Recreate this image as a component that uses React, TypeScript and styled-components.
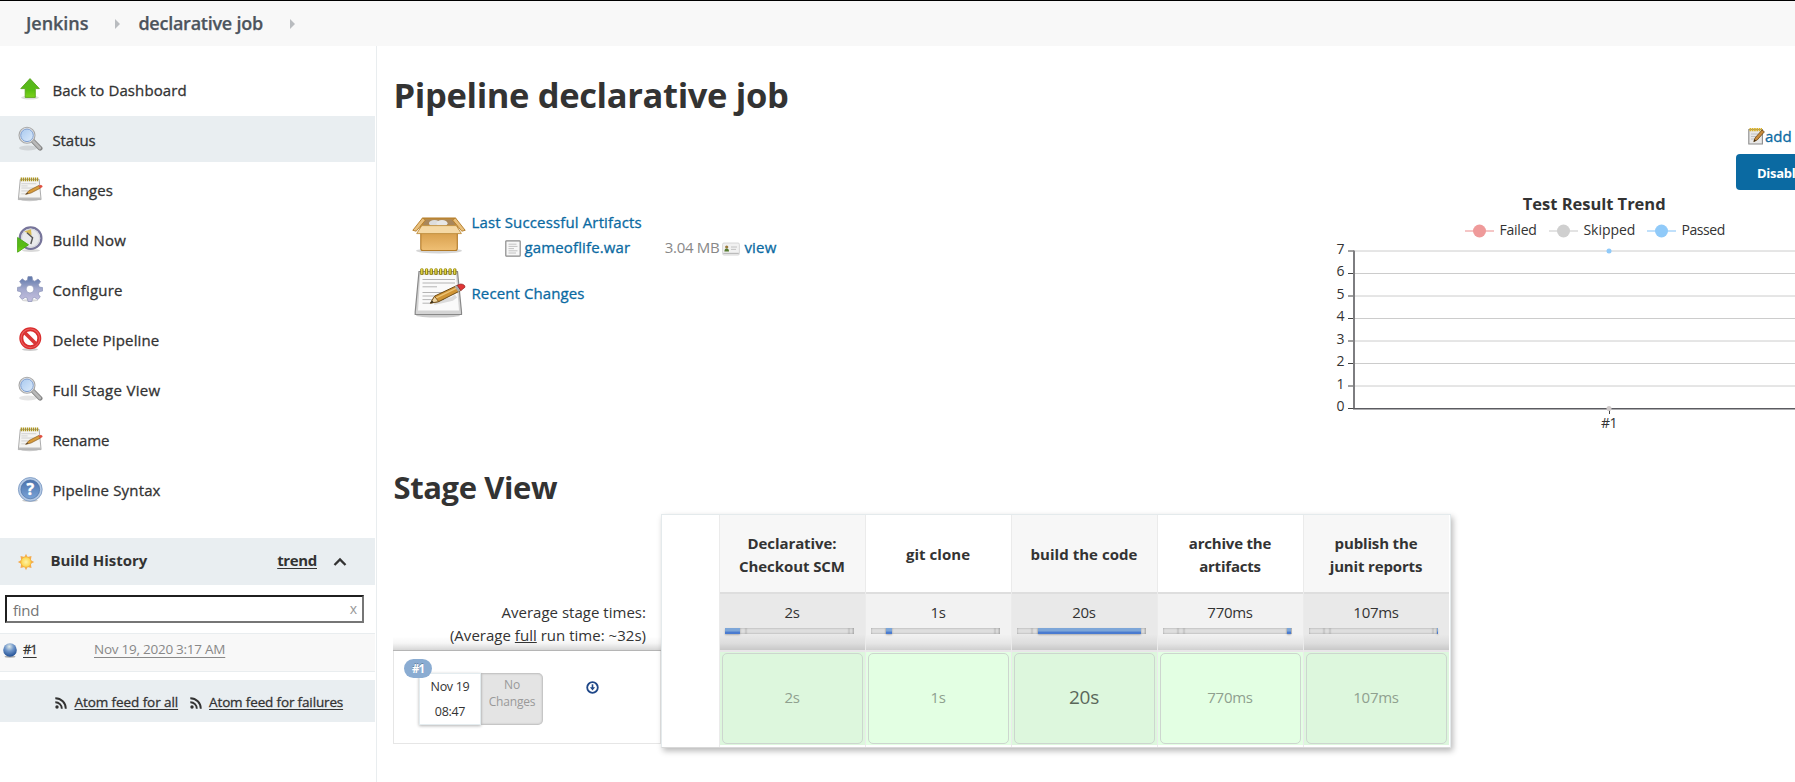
import React from 'react';
import styled, { createGlobalStyle, css } from 'styled-components';

const GlobalStyle = createGlobalStyle`
  * { box-sizing: border-box; }
  html, body { margin: 0; padding: 0; overflow: hidden; background: #fff; }
  body { font-family: "Open Sans", "Noto Sans", sans-serif; color: #333; font-size: 15px; }
  a { color: inherit; }
  svg { display: block; flex: none; }
`;

/* Medium weight: regular outlines thickened slightly. */
const medium = css`-webkit-text-stroke: 0.3px currentColor;`;

const Page = styled.div`
  width: 1795px;
  height: 782px;
  overflow: hidden;
  display: flex;
  flex-direction: column;
`;

const Breadcrumbs = styled.nav`
  height: 46px;
  flex: none;
  border-top: 1px solid #000;
  background: #f8f8f8;
  display: flex;
  align-items: center;
  padding-left: 26px;
`;
const Crumb = styled.span<{ $track: number }>`
  font-size: 18px;
  font-weight: 600;
  -webkit-text-stroke: 0.25px currentColor;
  color: #4d545d;
  line-height: 24px;
  padding-bottom: 2px;
  letter-spacing: ${p => p.$track}px;
`;
const CrumbArrow = styled.i<{ $after?: number }>`
  border-left: 5px solid #b9bcbf;
  border-top: 5px solid transparent;
  border-bottom: 5px solid transparent;
  margin-left: 27px;
  margin-right: ${p => p.$after ?? 0}px;
`;

const Columns = styled.div`
  flex: 1;
  display: flex;
  min-height: 0;
`;
const Sidebar = styled.aside`
  width: 377px;
  flex: none;
  border-right: 1px solid #e9edef;
  padding: 20px 1px 0 0;
`;
const TaskList = styled.ul`
  list-style: none;
  margin: 0 0 26px;
  padding: 0;
  display: grid;
  gap: 4px;
`;
const Task = styled.li<{ $active?: boolean }>`
  height: 46px;
  display: flex;
  align-items: center;
  padding-left: 17px;
  gap: 9.4px;
  background: ${p => (p.$active ? '#e9eef1' : 'transparent')};
`;
const TaskLabel = styled.span<{ $track: number }>`
  ${medium}
  line-height: 20px;
  padding-top: 1px;
  letter-spacing: ${p => p.$track}px;
`;

const HistoryHeader = styled.header`
  height: 47px;
  background: #e9eef1;
  display: flex;
  align-items: center;
  padding: 0 28px 0 17px;
  font-weight: 700;
  line-height: 20px;
`;
const HistoryTitle = styled.span`margin: -3px auto 0 15.4px; letter-spacing: -0.02px;`;
const TrendLink = styled.a`
  margin: -3px 16px 0 0;
  letter-spacing: -0.35px;
  text-decoration: underline;
  text-underline-offset: 2px;
`;
const SearchBox = styled.div`
  margin: 10px 11px 10px 5px;
  height: 28px;
  border: 2px solid;
  border-color: #1f1f1f #767676 #767676 #1f1f1f;
  display: flex;
  justify-content: space-between;
  align-items: center;
  padding: 2px 5px 0 6px;
  color: #757575;
  line-height: 20px;
  letter-spacing: -0.3px;
`;
const ClearMark = styled.span`color: #999; font-size: 14px; padding-bottom: 2px; letter-spacing: 0;`;
const BuildEntry = styled.div`
  height: 39px;
  border-top: 1px solid #e9edef;
  border-bottom: 1px solid #e9edef;
  background: #f8f8f8;
  display: flex;
  padding: 5px 0 0 3px;
  line-height: 20px;
`;
const BallSlot = styled.span`padding-top: 2px;`;
const BuildNumber = styled.a`
  ${medium}
  font-size: 13px;
  letter-spacing: -1.1px;
  width: 71px;
  margin-left: 6px;
  text-decoration: underline;
  text-underline-offset: 3px;
`;
const BuildDate = styled.a`
  font-size: 13.5px;
  letter-spacing: -0.25px;
  color: #888;
  text-decoration: underline;
  text-underline-offset: 3px;
`;
const FeedBar = styled.footer`
  margin-top: 8px;
  height: 42px;
  background: #e9eef1;
  display: flex;
  align-items: center;
  padding: 3px 0 0 55px;
`;
const FeedLink = styled.a<{ $track: number }>`
  ${medium}
  font-size: 13.5px;
  line-height: 20px;
  margin: -2px 11.5px 0 7.5px;
  letter-spacing: ${p => p.$track}px;
  text-decoration: underline;
  text-underline-offset: 2px;
  white-space: nowrap;
`;

const Main = styled.main`
  flex: 1;
  min-width: 0;
  padding: 29px 0 0 16px;
`;
const Heading = styled.h1<{ $size: number; $track: number }>`
  margin: 0;
  padding-left: 0.5px;
  font-size: ${p => p.$size}px;
  font-weight: 700;
  line-height: 40px;
  letter-spacing: ${p => p.$track}px;
`;
const Overview = styled.div`
  height: 352px;
  display: flex;
  justify-content: space-between;
`;
const Artifacts = styled.div`padding: 95px 0 0 19px;`;
const ArtifactRow = styled.div<{ $height: number }>`
  height: ${p => p.$height}px;
  display: flex;
  align-items: center;
`;
const ArtifactLines = styled.div`margin-left: 5.5px;`;
const ArtifactLine = styled.div<{ $inset?: number }>`
  height: 25px;
  display: flex;
  align-items: center;
  padding-bottom: ${p => (p.$inset ? 0 : 2)}px;
  padding-left: ${p => p.$inset ?? 0}px;
`;
const BlueLink = styled.a<{ $track?: number; $raise?: boolean }>`
  ${medium}
  color: #0b6aa2;
  line-height: 24px;
  white-space: nowrap;
  letter-spacing: ${p => p.$track ?? 0}px;
  padding-bottom: ${p => (p.$raise ? 2 : 0)}px;
`;
const FileSize = styled.span`
  color: #888;
  padding-bottom: 2px;
  margin: 0 3px 0 34.5px;
  letter-spacing: -0.3px;
`;
const IconSlot = styled.span<{ $gap: number }>`
  margin-right: ${p => p.$gap}px;
  padding-top: 2px;
`;

const TrendPanel = styled.section`
  width: 462px;
  padding-top: 9px;
  overflow: hidden;
`;
const DescriptionRow = styled.div`
  height: 24px;
  padding: 0 0 0 415px;
  display: flex;
  align-items: center;
`;
const DisableButton = styled.button`
  display: block;
  margin: 6px 0 0 403px;
  width: 150px;
  height: 36px;
  border: 0;
  border-radius: 4px;
  padding: 2px 21px 0;
  background: #0b6aa2;
  color: #fff;
  font: 700 13px/20px "Open Sans", sans-serif;
  letter-spacing: -0.3px;
  text-align: left;
  white-space: nowrap;
`;

const StageView = styled.section`
  display: flex;
  margin-top: 7px;
`;
const RunsColumn = styled.div`
  width: 268px;
  padding-top: 80px;
`;
const AverageBox = styled.div`
  height: 57px;
  padding: 7px 15px 0 0;
  border-bottom: 1px solid #b5b5b5;
  background: linear-gradient(to bottom, rgba(0,0,0,0) 76%, rgba(0,0,0,0.04) 88%, rgba(0,0,0,0.16) 100%);
  text-align: right;
  line-height: 23px;
  letter-spacing: 0.02px;
`;
const RunRow = styled.div`
  position: relative;
  height: 93px;
  border: 1px solid #e6e6e6;
  border-top: 0;
  display: flex;
  padding: 22px 0 0 25px;
`;
const RunBadge = styled.span`
  position: absolute;
  left: 10px;
  top: 8px;
  width: 28px;
  height: 19px;
  border-radius: 9.5px;
  background: #8aacd2;
  color: #fff;
  font-size: 11.5px;
  font-weight: 700;
  line-height: 19px;
  text-align: center;
  letter-spacing: -0.9px;
  text-shadow: 0 -1px 0 rgba(0,0,0,0.25);
`;
const RunDate = styled.div`
  width: 62px;
  height: 52px;
  border: 1px solid #e4ecef;
  background: #fff;
  box-shadow: 0 1px 3px rgba(0,0,0,0.3);
  font-size: 12.5px;
  letter-spacing: -0.3px;
  line-height: 25px;
  text-align: center;
`;
const RunChanges = styled.div`
  width: 62px;
  height: 52px;
  border-radius: 0 5px 5px 0;
  background: #e4e4e4;
  box-shadow: inset 0 0 2px 1px rgba(0,0,0,0.18);
  color: #999;
  font-size: 12px;
  letter-spacing: -0.2px;
  line-height: 17px;
  padding-top: 3px;
  text-align: center;
`;
const DownloadSlot = styled.span`padding: 8px 0 0 43px;`;

const StageTable = styled.div`
  position: relative;
  width: 790px;
  height: 234px;
  border: 1px solid #e4eaec;
  border-bottom-color: #d8d8d8;
  background: #fff;
  box-shadow: 2px 3px 6px rgba(0,0,0,0.28);
  display: flex;
  padding-left: 57px;
`;
const StageColumn = styled.div`
  width: 146px;
  border-left: 1px solid #ebebeb;
  text-align: center;
`;
const StageName = styled.div<{ $shade: boolean; $track: number }>`
  height: 79px;
  border-bottom: 2px solid #dedede;
  background: ${p => (p.$shade ? '#f7f7f7' : '#fff')};
  display: flex;
  align-items: center;
  justify-content: center;
  padding: 2px 1px 0 0;
  font-weight: 700;
  line-height: 23px;
  white-space: pre-line;
  letter-spacing: ${p => p.$track}px;
`;
const StageAverage = styled.div<{ $shade: boolean }>`
  height: 58px;
  border-bottom: 2px solid #e9e6e9;
  background:
    linear-gradient(to bottom, rgba(0,0,0,0) 72%, rgba(0,0,0,0.05) 88%, rgba(0,0,0,0.14) 100%),
    ${p => (p.$shade ? '#e9e9e9' : '#f2f2f2')};
  padding: 7px 11px 0 5px;
  line-height: 22px;
`;
const AverageTime = styled.div`padding-left: 5px; letter-spacing: -0.3px;`;
const Track = styled.div`
  display: flex;
  height: 6px;
  margin-top: 5px;
  width: 129px;
`;
const Segment = styled.i<{ $on: boolean }>`
  background: ${p => (p.$on ? 'linear-gradient(#7da6d8 45%, #4a7bd0 75%)' : '#dedede')};
  box-shadow: ${p => (p.$on ? '0 1px 2px rgba(0,0,0,0.25)' : 'inset 0 0 2px rgba(0,0,0,0.35)')};
`;
const StageCell = styled.div<{ $shade: boolean }>`
  height: 93px;
  background: ${p => (p.$shade ? '#ddf7dd' : '#e3ffe3')};
  padding: 1px 2px;
`;
const StageResult = styled.div<{ $big: boolean }>`
  height: 91px;
  border: 1px solid #cdd6cf;
  border-radius: 5px;
  display: flex;
  align-items: center;
  justify-content: center;
  padding: 0 1px 4px 0;
  font-size: ${p => (p.$big ? 19 : 15)}px;
  letter-spacing: -0.25px;
  color: ${p => (p.$big ? '#5a675a' : '#8fa08f')};
`;

const ArrowUp = () => (
  <svg width="26" height="26" viewBox="0 0 26 26">
    <ellipse cx="13" cy="21.6" rx="9" ry="2" fill="#000" opacity=".13" />
    <path d="M13 2.6 22.3 12.6H18.3V21.4H8.2V12.6H3.8Z" fill="url(#green)" stroke="#5aa51c" strokeWidth=".9" />
  </svg>
);
const Magnifier = () => (
  <svg width="26" height="26" viewBox="0 0 26 26">
    <ellipse cx="11" cy="22" rx="9" ry="2.4" fill="#000" opacity=".1" />
    <path d="M15.8 14.8 23.2 22.4" stroke="#858585" strokeWidth="4.6" strokeLinecap="round" />
    <path d="M16 15 22.8 22" stroke="#b9b9b9" strokeWidth="2.8" strokeLinecap="round" />
    <circle cx="10" cy="9.3" r="8" fill="#e8e8e8" stroke="#a8a8a8" strokeWidth="1.1" />
    <circle cx="10" cy="9.3" r="6.3" fill="url(#lens)" stroke="#7f9fd0" strokeWidth="1" />
  </svg>
);
const Notepad = () => (
  <svg width="26" height="26" viewBox="0 0 27 26">
    <ellipse cx="13" cy="24" rx="10" ry="1.6" fill="#000" opacity=".2" />
    <path d="M3.4 3H23L25 24H1.4Z" fill="#f4f4f2" stroke="#aaa" strokeWidth="1" />
    <path d="M1.6 21.8H24.8V24H1.4Z" fill="#bbb" />
    <path d="M4.5 1V5M6.6 1V5M8.7 1V5M10.8 1V5M12.9 1V5M15 1V5M17.1 1V5M19.2 1V5M21.3 1V5" stroke="#ab9422" strokeWidth="1.35" />
    <path d="M4.5 7.5H20M4.5 9.8H11M4.5 12H18M4.5 15H15M4.5 18H10" stroke="#ccc" strokeWidth=".9" />
    <path d="M9 18.5 12.5 14.6 22.6 9.4 24.4 12 14.5 17.2Z" fill="#d79b3c" stroke="#87591c" strokeWidth=".7" />
    <path d="M22.2 9.6 24.6 8.8Q27 9 26.4 11L24.3 12.2Z" fill="#e05040" />
    <path d="M8.7 18.8 10.8 16.6 12 18Z" fill="#594a35" />
  </svg>
);
const BuildClock = () => (
  <svg width="26" height="28" viewBox="0 0 26 28">
    <ellipse cx="14" cy="25.5" rx="9" ry="1.5" fill="#000" opacity=".15" />
    <circle cx="13.6" cy="13.2" r="10.8" fill="#e9eaec" stroke="#77759a" strokeWidth="2.2" />
    <circle cx="13.6" cy="13.2" r="9" fill="none" stroke="#d5d6dd" strokeWidth="1.2" />
    <path d="M7.4 6.5 14 4.2 14.6 10.5Z" fill="#d8bd55" />
    <path d="M10 7.8 15.6 12.8 13.8 19" fill="none" stroke="#555" strokeWidth="1.4" />
    <path d="M0.6 12.5V27.2L11.5 19.8Z" fill="url(#green)" stroke="#48a514" strokeWidth=".9" />
  </svg>
);
const Gear = () => (
  <svg width="26" height="26" viewBox="0 0 26 26">
    <ellipse cx="13" cy="24.4" rx="8" ry="1.3" fill="#000" opacity=".15" />
    <path fillRule="evenodd" d="M11 .6H15L15.8 4.4 17.8 5.2 21 3 23.6 5.6 21.4 8.6 22.2 11 25.6 11.6V15L22.2 15.7 21.2 18 23.3 21 20.7 23.6 17.6 21.4 15.5 22.3 14.9 25.5H11L10.3 22.2 8.2 21.3 5.2 23.4 2.5 20.8 4.6 17.8 3.8 15.7.4 15V11.4L3.8 10.8 4.7 8.5 2.6 5.4 5.2 2.8 8.2 5 10.3 4.2ZM13 9.2A3.9 3.9 0 1 0 13 17 3.9 3.9 0 1 0 13 9.2Z" fill="url(#gear)" stroke="#8b93b8" strokeWidth=".7" />
  </svg>
);
const NoEntry = () => (
  <svg width="26" height="26" viewBox="0 0 26 26">
    <ellipse cx="13" cy="23.5" rx="8" ry="1.4" fill="#000" opacity=".2" />
    <circle cx="13.3" cy="12.3" r="9" fill="#fff" stroke="#d92c2c" strokeWidth="4" />
    <circle cx="13.3" cy="12.3" r="9.3" fill="none" stroke="#ea5c5c" strokeWidth="1.2" />
    <path d="M7.3 6.3 19.3 18.3" stroke="#d93636" strokeWidth="3.7" />
  </svg>
);
const Help = () => (
  <svg width="26" height="26" viewBox="0 0 26 26">
    <ellipse cx="13" cy="24.6" rx="8" ry="1.3" fill="#000" opacity=".2" />
    <circle cx="13.3" cy="13.4" r="11.9" fill="#b4c9e4" stroke="#7594bf" strokeWidth=".8" />
    <circle cx="13.3" cy="13.4" r="9.4" fill="url(#help)" stroke="#4369a0" strokeWidth=".6" />
    <text x="13.3" y="19.2" textAnchor="middle" fontSize="16" fontWeight="700" fill="#fff" stroke="#fff" strokeWidth=".4">?</text>
  </svg>
);
const Sun = () => (
  <svg width="18" height="18" viewBox="0 0 18 18">
    <path d="M9 .8 10.5 4 14.5 3 13.8 7.2 17.2 9 13.8 10.8 14.5 15 10.5 14 9 17.2 7.5 14 3.5 15 4.2 10.8.8 9 4.2 7.2 3.5 3 7.5 4Z" fill="#f5a94a" />
    <circle cx="9" cy="9" r="5.2" fill="url(#sun)" stroke="#f2b03e" strokeWidth=".7" />
  </svg>
);
const ChevronUp = () => (
  <svg width="14" height="10" viewBox="0 0 14 10">
    <path d="M1.5 8 7 2.5 12.5 8" fill="none" stroke="#333" strokeWidth="2.3" />
  </svg>
);
const BlueBall = () => (
  <svg width="14" height="18" viewBox="0 0 14 18">
    <ellipse cx="7" cy="15.6" rx="5.5" ry="1.2" fill="#000" opacity=".3" />
    <circle cx="7" cy="9" r="6.8" fill="url(#ball)" />
  </svg>
);
const Rss = () => (
  <svg width="12" height="12" viewBox="0 0 12 12">
    <circle cx="2" cy="10" r="1.7" fill="#333" />
    <path d="M.3 5.2A6.4 6.4 0 0 1 6.8 11.8M.3 1.2A10.4 10.4 0 0 1 10.8 11.8" fill="none" stroke="#333" strokeWidth="1.9" />
  </svg>
);
const Package = () => (
  <svg width="54" height="38" viewBox="0 0 54 38">
    <ellipse cx="27" cy="34.8" rx="23" ry="2.6" fill="#000" opacity=".16" />
    <path d="M10.5 2H43.5L47 17H7Z" fill="#c08c3e" stroke="#b27a27" strokeWidth="1" />
    <path d="M13 3.5H41L43 9H11Z" fill="#a9875a" />
    <ellipse cx="22.5" cy="7.3" rx="5.5" ry="3.3" fill="#ddd" /><ellipse cx="30" cy="7.3" rx="5.5" ry="3.3" fill="#e7e7e7" />
    <path d="M10.5 2 .8 14.3 4.2 15.2 13.5 4Z" fill="#e9c07c" stroke="#b27a27" strokeWidth=".9" />
    <path d="M43.5 2 53.2 14.3 49.8 15.2 40.5 4Z" fill="#e9c07c" stroke="#b27a27" strokeWidth=".9" />
    <path d="M8.8 16H45.3V32.5Q45.3 34.5 43.3 34.5H10.8Q8.8 34.5 8.8 32.5Z" fill="url(#carton)" stroke="#b27a27" strokeWidth="1.1" />
    <path d="M9.8 9.6H44.3L49.4 17.6H4.7Z" fill="#f5d9a6" stroke="#c08f41" strokeWidth=".9" />
  </svg>
);
const BigNotepad = () => (
  <svg width="54" height="52" viewBox="0 0 54 52">
    <ellipse cx="26" cy="48.6" rx="22" ry="2" fill="#000" opacity=".2" />
    <path d="M7 4.5H45.5L49.5 45V47.5H3.2V45Z" fill="#d4d4d4" stroke="#888" strokeWidth="1.2" />
    <path d="M8.3 8H44L47 43.5H6Z" fill="#fafafa" />
    {[10, 14.7, 19.4, 24.1, 28.8, 33.5, 38.2, 42.9].map(x => (
      <g key={x}><rect x={x - 1.8} y="1.2" width="3.4" height="6.8" rx="1.6" fill="#8f8116" /><rect x={x - 0.8} y="1.6" width="1.2" height="5.6" rx=".6" fill="#efe24a" /></g>
    ))}
    <path d="M10.5 12.5H43M10.5 16H43M10.5 19.8H25M10.5 25.5H40M10.5 29H36M10.5 32.6H32M10.5 36.2H19" stroke="#b4b4b4" strokeWidth="1" />
    <path d="M22 36 40 32 44 29" stroke="#000" strokeOpacity=".12" strokeWidth="4" fill="none" />
    <path d="M18.5 36 22.8 29 45.2 18.4 48.6 23.6 26.8 34.6Z" fill="#cf9434" stroke="#6e4a12" strokeWidth="1" />
    <path d="M23.6 31.2 46 20.3" stroke="#edc476" strokeWidth="1.4" />
    <path d="M18.3 36.3 22.6 29.3 26.6 34.6Z" fill="#eed5a4" stroke="#6e4a12" strokeWidth=".8" />
    <path d="M18.3 36.3 20 33.5 21.9 35.5Z" fill="#332a1a" />
    <path d="M42.7 19.5 45.2 18.2 48.7 23.4 46.2 24.9Z" fill="#aaa" />
    <path d="M45.2 18.2 48.6 17Q53 17.2 53 20.2L48.9 23.6Z" fill="#e03535" stroke="#8e2020" strokeWidth=".7" />
  </svg>
);
const FileIcon = () => (
  <svg width="16" height="17" viewBox="0 0 16 17">
    <rect x=".8" y=".8" width="14.4" height="15.4" rx=".8" fill="#f7f7f7" stroke="#8a8a8a" strokeWidth="1.2" />
    <path d="M3.5 4.2H11.5M3.5 6.4H12.5M3.5 8.6H9M3.5 10.8H12.5M3.5 13H11" stroke="#c2c2c2" strokeWidth="1" />
  </svg>
);
const CardIcon = () => (
  <svg width="18" height="14" viewBox="0 0 18 14">
    <rect x=".6" y="1" width="16.8" height="12" rx="1.4" fill="#f1f1f1" stroke="#d4d4d4" strokeWidth=".9" />
    <path d="M1.2 10.8H16.8V12H1.2Z" fill="#bcbcbc" />
    <circle cx="4.7" cy="5" r="1.6" fill="#9c7a3c" /><path d="M2.4 9.6Q2.4 6.8 4.7 6.6 7 6.8 7 9.6Z" fill="#557a2f" />
    <path d="M9 5H15M9 7.4H14" stroke="#bdbdbd" strokeWidth=".9" />
  </svg>
);
const EditIcon = () => (
  <svg width="17" height="18" viewBox="0 0 17 18">
    <path d="M.8 2.5H14.4V17H.8Z" fill="#e9e9e9" stroke="#8c8c8c" strokeWidth="1.1" />
    <path d="M1.5 2.6H14" stroke="#d8b12c" strokeWidth="3.4" strokeDasharray="1.7 .6" />
    <path d="M3 7H10M3 9.5H8M3 12H6" stroke="#bbb" strokeWidth=".9" />
    <path d="M5.8 14.6 7 11 14 3 16.4 4.8 9.2 13Z" fill="#c98b3c" stroke="#6a4412" strokeWidth=".8" />
    <path d="M5.7 14.8 6.5 12.3 8 13.7Z" fill="#33230c" />
  </svg>
);
const Download = () => (
  <svg width="13" height="13" viewBox="0 0 13 13">
    <circle cx="6.5" cy="6.5" r="5.3" fill="#fff" stroke="#1f4788" strokeWidth="1.8" />
    <path d="M6.5 3.3V8" stroke="#1f4788" strokeWidth="1.6" /><path d="M3.9 6.3H9.1L6.5 9.5Z" fill="#1f4788" />
  </svg>
);
const Gradients = () => (
  <svg width="0" height="0">
    <defs>
      <linearGradient id="green" x2="0" y2="1"><stop stopColor="#57b524" /><stop offset=".6" stopColor="#58bd12" /><stop offset="1" stopColor="#7dd31c" /></linearGradient>
      <linearGradient id="lens" x2="1" y2="1"><stop stopColor="#a9c9ef" /><stop offset="1" stopColor="#dcebfb" /></linearGradient>
      <linearGradient id="gear" x2="0" y2="1"><stop stopColor="#5c76a9" /><stop offset=".5" stopColor="#a3a9cd" /><stop offset="1" stopColor="#c4bfdf" /></linearGradient>
      <linearGradient id="help" x2="0" y2="1"><stop stopColor="#4a72ac" /><stop offset="1" stopColor="#7aa3d6" /></linearGradient>
      <radialGradient id="sun"><stop stopColor="#fff3a8" /><stop offset="1" stopColor="#fbd348" /></radialGradient>
      <radialGradient id="ball" cx=".45" cy=".25" r=".75"><stop stopColor="#dfe9e8" /><stop offset=".45" stopColor="#6e95c9" /><stop offset="1" stopColor="#1f4d92" /></radialGradient>
      <linearGradient id="carton" x2="0" y2="1"><stop stopColor="#d79e4b" /><stop offset="1" stopColor="#efbf74" /></linearGradient>
    </defs>
  </svg>
);

const tasks = [
  { label: 'Back to Dashboard', icon: <ArrowUp />, track: 0.1 },
  { label: 'Status', icon: <Magnifier />, track: -0.05 },
  { label: 'Changes', icon: <Notepad />, track: 0.09 },
  { label: 'Build Now', icon: <BuildClock />, track: 0.25 },
  { label: 'Configure', icon: <Gear />, track: 0.2 },
  { label: 'Delete Pipeline', icon: <NoEntry />, track: 0.15 },
  { label: 'Full Stage View', icon: <Magnifier />, track: 0.3 },
  { label: 'Rename', icon: <Notepad />, track: -0.12 },
  { label: 'Pipeline Syntax', icon: <Help />, track: 0.15 },
];

const segments = [15, 6, 103, 4, 1];
const stages = [
  { name: 'Declarative:\nCheckout SCM', time: '2s', track: -0.08 },
  { name: 'git clone', time: '1s', track: 0.05 },
  { name: 'build the code', time: '20s', track: 0.04 },
  { name: 'archive the\nartifacts', time: '770ms', track: -0.2 },
  { name: 'publish the\njunit reports', time: '107ms', track: -0.15 },
];

const legend = [
  { name: 'Failed', color: '#ef9a9a', x: 132, width: 37.5 },
  { name: 'Skipped', color: '#cfcfcf', x: 216, width: 52 },
  { name: 'Passed', color: '#90caf9', x: 314, width: 44 },
];

function TrendChart() {
  const axisY = (v: number) => 218.5 - v * 22.5;
  return (
    <svg width="462" height="250" viewBox="0 0 462 250" fontSize="14" fill="#333">
      <text x="261.2" y="20" textAnchor="middle" fontSize="16.5" fontWeight="700" letterSpacing="-.03">Test Result Trend</text>
      {legend.map(s => (
        <g key={s.name}>
          <path d={`M${s.x} 41H${s.x + 29}`} stroke={s.color} strokeWidth="1.6" opacity=".7" />
          <circle cx={s.x + 14.5} cy="41" r="6.5" fill={s.color} />
          <text x={s.x + 34.4} y="45" textLength={s.width}>{s.name}</text>
        </g>
      ))}
      {[0, 1, 2, 3, 4, 5, 6, 7].map(v => (
        <g key={v}>
          {v > 0 && <path d={`M22 ${axisY(v)}H462`} stroke="#ccc" />}
          <path d={`M15 ${axisY(v)}H21`} stroke="#444" />
          <text x="11.5" y={axisY(v) + 2.7} textAnchor="end">{v}</text>
        </g>
      ))}
      <path d="M21 60.5V219" stroke="#7d7d80" strokeWidth="2" />
      <path d="M20 218.7H462" stroke="#5b5b60" strokeWidth="1.5" />
      <path d="M276.5 219V224" stroke="#444" />
      <circle cx="276" cy="61" r="2.5" fill="#90caf9" />
      <circle cx="276" cy="218.5" r="2.5" fill="#cfcaca" />
      <text x="276" y="237.5" textAnchor="middle" letterSpacing="-.6">#1</text>
    </svg>
  );
}

export default function App() {
  return (
    <Page>
      <GlobalStyle />
      <Breadcrumbs>
        <Crumb $track={-0.05}>Jenkins</Crumb>
        <CrumbArrow $after={18} />
        <Crumb $track={-0.25}>declarative job</Crumb>
        <CrumbArrow />
        <Gradients />
      </Breadcrumbs>
      <Columns>
        <Sidebar>
          <TaskList>
            {tasks.map(t => (
              <Task key={t.label} $active={t.label === 'Status'}>
                {t.icon}
                <TaskLabel $track={t.track}>{t.label}</TaskLabel>
              </Task>
            ))}
          </TaskList>
          <HistoryHeader>
            <Sun />
            <HistoryTitle>Build History</HistoryTitle>
            <TrendLink>trend</TrendLink>
            <ChevronUp />
          </HistoryHeader>
          <SearchBox>find<ClearMark>x</ClearMark></SearchBox>
          <BuildEntry>
            <BallSlot><BlueBall /></BallSlot>
            <BuildNumber>#1</BuildNumber>
            <BuildDate>Nov 19, 2020 3:17 AM</BuildDate>
          </BuildEntry>
          <FeedBar>
            <Rss />
            <FeedLink $track={-0.08}>Atom feed for all</FeedLink>
            <Rss />
            <FeedLink $track={-0.15}>Atom feed for failures</FeedLink>
          </FeedBar>
        </Sidebar>
        <Main>
          <Heading $size={34.5} $track={-0.36}>Pipeline declarative job</Heading>
          <Overview>
            <Artifacts>
              <ArtifactRow $height={50}>
                <Package />
                <ArtifactLines>
                  <ArtifactLine><BlueLink $track={0.14}>Last Successful Artifacts</BlueLink></ArtifactLine>
                  <ArtifactLine $inset={33.5}>
                    <IconSlot $gap={3.5}><FileIcon /></IconSlot>
                    <BlueLink $track={0.13} $raise>gameoflife.war</BlueLink>
                    <FileSize>3.04 MB</FileSize>
                    <IconSlot $gap={4}><CardIcon /></IconSlot>
                    <BlueLink $track={0.2} $raise>view</BlueLink>
                  </ArtifactLine>
                </ArtifactLines>
              </ArtifactRow>
              <ArtifactRow $height={66}>
                <BigNotepad />
                <ArtifactLines><BlueLink $track={0.1}>Recent Changes</BlueLink></ArtifactLines>
              </ArtifactRow>
            </Artifacts>
            <TrendPanel>
              <DescriptionRow><EditIcon /><BlueLink $track={-0.05}>add description</BlueLink></DescriptionRow>
              <DisableButton>Disable Project</DisableButton>
              <TrendChart />
            </TrendPanel>
          </Overview>
          <Heading as="h2" $size={31} $track={-0.4}>Stage View</Heading>
          <StageView>
            <RunsColumn>
              <AverageBox>
                Average stage times:<br />(Average <u>full</u> run time: ~32s)
              </AverageBox>
              <RunRow>
                <RunBadge>#1</RunBadge>
                <RunDate>Nov 19<br />08:47</RunDate>
                <RunChanges>No<br />Changes</RunChanges>
                <DownloadSlot><Download /></DownloadSlot>
              </RunRow>
            </RunsColumn>
            <StageTable>
              {stages.map((s, i) => (
                <StageColumn key={s.name}>
                  <StageName $shade={i % 2 === 0} $track={s.track}>{s.name}</StageName>
                  <StageAverage $shade={i % 2 === 0}>
                    <AverageTime>{s.time}</AverageTime>
                    <Track>
                      {segments.map((w, j) => <Segment key={j} $on={j === i} style={{ width: w }} />)}
                    </Track>
                  </StageAverage>
                  <StageCell $shade={i % 2 === 0}>
                    <StageResult $big={i === 2}>{s.time}</StageResult>
                  </StageCell>
                </StageColumn>
              ))}
            </StageTable>
          </StageView>
        </Main>
      </Columns>
    </Page>
  );
}
